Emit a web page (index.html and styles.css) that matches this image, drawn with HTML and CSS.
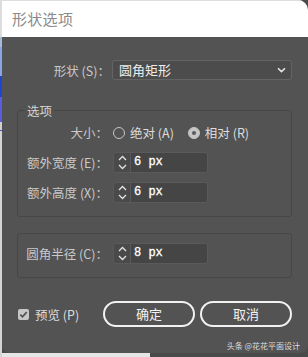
FILE: index.html
```html
<!DOCTYPE html>
<html lang="zh">
<head>
<meta charset="utf-8">
<link rel="stylesheet" href="styles.css">
</head>
<body>
<div class="dialog">
  <div class="titlebar">形状选项</div>
  <div class="content">
    <div class="row top-row">
      <span class="label">形状 (S)：</span>
      <div class="select">
        <span>圆角矩形</span>
        <svg class="chev" width="9" height="6" viewBox="0 0 9 6"><path d="M1 1.2 L4.5 4.6 L8 1.2" fill="none" stroke="#e8e8e8" stroke-width="1.5"/></svg>
      </div>
    </div>

    <div class="group g1">
      <span class="legend">选项</span>
      <div class="row">
        <span class="label">大小：</span>
        <span class="radio"></span><span class="opt">绝对 (A)</span>
        <span class="radio on"></span><span class="opt">相对 (R)</span>
      </div>
      <div class="row">
        <span class="label">额外宽度 (E)：</span>
        <div class="field">
          <div class="spin"><svg width="11" height="17" viewBox="0 0 11 17"><path d="M2 6 L5.5 2.5 L9 6 M2 11 L5.5 14.5 L9 11" fill="none" stroke="#e4e4e4" stroke-width="1.3"/></svg></div>
          <div class="val">6 px</div>
        </div>
      </div>
      <div class="row">
        <span class="label">额外高度 (X)：</span>
        <div class="field">
          <div class="spin"><svg width="11" height="17" viewBox="0 0 11 17"><path d="M2 6 L5.5 2.5 L9 6 M2 11 L5.5 14.5 L9 11" fill="none" stroke="#e4e4e4" stroke-width="1.3"/></svg></div>
          <div class="val">6 px</div>
        </div>
      </div>
    </div>

    <div class="group g2">
      <div class="row">
        <span class="label">圆角半径 (C)：</span>
        <div class="field">
          <div class="spin"><svg width="11" height="17" viewBox="0 0 11 17"><path d="M2 6 L5.5 2.5 L9 6 M2 11 L5.5 14.5 L9 11" fill="none" stroke="#e4e4e4" stroke-width="1.3"/></svg></div>
          <div class="val">8 px</div>
        </div>
      </div>
    </div>

    <div class="footer">
      <span class="check"><svg width="11" height="11" viewBox="0 0 11 11"><path d="M2.3 5.6 L4.5 7.8 L8.7 3.2" fill="none" stroke="#555" stroke-width="1.8"/></svg></span>
      <span class="opt preview">预览 (P)</span>
      <button class="btn ok">确定</button>
      <button class="btn">取消</button>
    </div>
    <div class="watermark">头条 @花花平面设计</div>
  </div>
</div>
</body>
</html>
```

FILE: styles.css
```css
* { box-sizing: border-box; }
html, body { margin: 0; padding: 0; }
body {
  width: 308px;
  height: 357px;
  overflow: hidden;
  font-family: "Noto Sans CJK SC", "Noto Sans", sans-serif;
  background:
    linear-gradient(to bottom, #dcdcdc 0 37px, #a8b8d8 37px 47px, #8aa4e4 47px 76px, #2244cc 76px 97px, #5c5ce0 97px 122px, #cfcfcf 122px 130px, #3a5ad0 130px 131px, #d4d4d4 131px) left top / 2px 100% no-repeat,
    linear-gradient(#e6e6e6, #e6e6e6) left bottom / 150px 4px no-repeat,
    #4a4a4a;
}
.dialog {
  margin-left: 2px;
  width: 306px;
  height: 353px;
  background: #535353;
  border-radius: 0 10px 8px 8px;
  overflow: hidden;
}
.titlebar {
  height: 37px;
  background: #fff;
  border-top: 1px solid #dedede;
  color: #8a8a8a;
  font-size: 15px;
  line-height: 36px;
  padding-left: 10px;
  letter-spacing: 0.3px;
}
.content {
  padding: 23px 16px 0 15px;
}
.row {
  display: flex;
  align-items: center;
  height: 21px;
}
.label {
  flex: none;
  text-align: right;
  color: #c9c9c9;
  font-size: 12.5px;
  line-height: 21px;
  white-space: nowrap;
}
.top-row { height: 20px; }
.top-row .label { width: 93px; margin-right: 2px; }
.select {
  flex: 1;
  height: 20px;
  background: #4c4c4c;
  border: 1px solid #646464;
  border-radius: 3px;
  display: flex;
  align-items: center;
  justify-content: space-between;
  padding: 0 4px 0 6px;
  color: #ececec;
  font-size: 13px;
  line-height: 18px;
}
.chev { margin-right: 1px; }
.group {
  position: relative;
  border: 1px solid #474747;
  border-radius: 3px;
  display: flex;
  flex-direction: column;
  gap: 9px;
}
.g1 { margin-top: 30px; padding: 11px 0 13px; }
.g2 { margin-top: 16px; padding: 9px 0 13px; }
.legend {
  position: absolute;
  top: -9px;
  left: 7px;
  padding: 0 2px;
  background: #535353;
  color: #d4d4d4;
  font-size: 12.5px;
  line-height: 17px;
}
.group .label { width: 90px; margin-right: 5px; }
.radio {
  flex: none;
  width: 12px;
  height: 12px;
  border: 1.5px solid #c6c6c6;
  border-radius: 50%;
  margin-right: 5px;
}
.radio.on {
  margin-left: 14px;
  background: #c6c6c6;
  display: flex;
  align-items: center;
  justify-content: center;
}
.radio.on::after {
  content: "";
  width: 4px;
  height: 4px;
  border-radius: 50%;
  background: #5a5a5a;
}
.opt {
  color: #dcdcdc;
  font-size: 12.5px;
  line-height: 21px;
  white-space: nowrap;
}
.field {
  display: flex;
  width: 95px;
  height: 21px;
  border: 1px solid #5a5a5a;
  border-radius: 3px;
  overflow: hidden;
}
.spin {
  width: 17px;
  flex: none;
  background: #4a4a4a;
  border-right: 1px solid #5a5a5a;
  display: flex;
  align-items: center;
  justify-content: center;
}
.val {
  flex: 1;
  background: #454545;
  color: #ffffff;
  font-family: "Liberation Mono", monospace;
  font-size: 12px;
  line-height: 19px;
  padding-left: 3px;
  -webkit-text-stroke: 0.3px #ffffff;
}
.footer {
  display: flex;
  align-items: center;
  margin-top: 23px;
  height: 26px;
  padding-left: 1px;
}
.check {
  width: 11px;
  height: 11px;
  background: #c8c8c8;
  border-radius: 2px;
  display: flex;
  margin-right: 6px;
}
.preview { flex: none; }
.btn {
  width: 92px;
  height: 26px;
  border: 2px solid #f2f2f2;
  border-radius: 13px;
  background: transparent;
  color: #f2f2f2;
  font-family: "Noto Sans CJK SC", sans-serif;
  font-size: 13px;
  line-height: 20px;
  padding: 0;
}
.ok { margin-left: auto; margin-right: 5px; }
.watermark {
  text-align: right;
  margin-top: 14px;
  margin-right: -8px;
  color: #dedede;
  font-size: 8px;
  line-height: 10px;
  white-space: nowrap;
}
```
